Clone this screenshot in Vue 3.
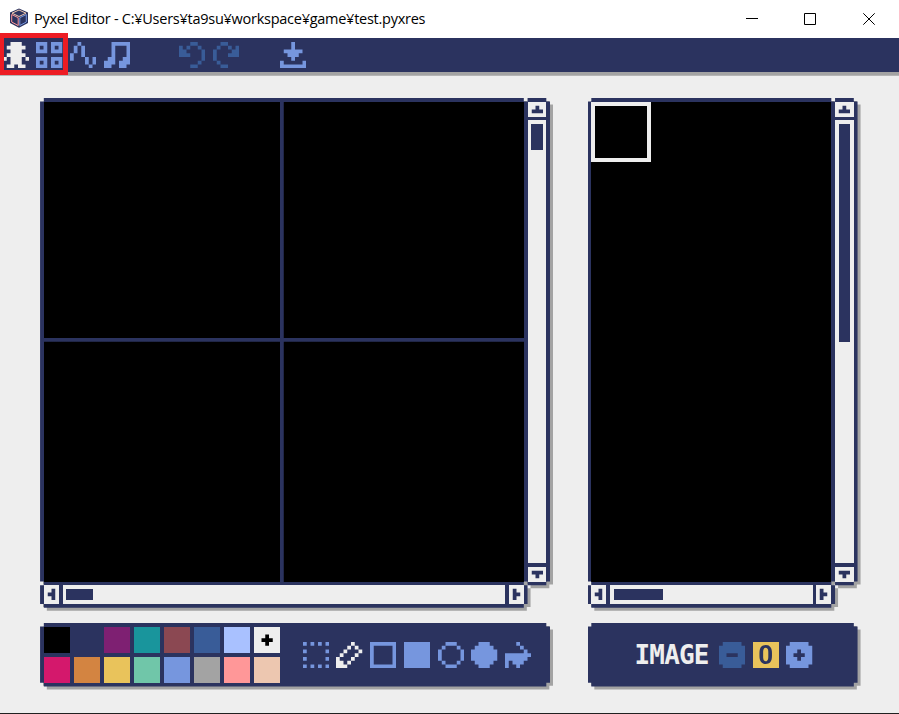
<script setup>
import { ref } from 'vue';

const title = ref("Pyxel Editor - C:¥Users¥ta9su¥workspace¥game¥test.pyxres");
const color = ref(7);
const tool = ref("pencil");
const image = ref(0);

const palette = [
    "#000000", "#2b335f", "#7e2072", "#19959c", "#8b4852", "#395c98", "#a9c1ff", "#eeeeee",
    "#d4186c", "#d38441", "#e9c35b", "#70c6a9", "#7696de", "#a3a3a3", "#ff9798", "#edc7b0",
];

const bitmaps = {
    image: ["..###..", ".#####.", "..###..", ".#####.", "#.###.#", "..###..", ".##.##."],
    tilemap: ["###.###", "#.#.#.#", "###.###", ".......", "###.###", "#.#.#.#", "###.###"],
    sound: ["..#....", ".#.#...", ".#.#...", "#..#...", "#...#.#", "....#.#", ".....#."],
    music: ["..#####", "..#...#", "..#...#", "..#...#", ".##..##", "###.###", "##..##."],
    undo: ["...##..", "#.#..#.", "##....#", "###...#", "......#", ".....#.", "...##.."],
    redo: ["..##...", ".#..#.#", "#....##", "#...###", "#......", ".#.....", "..##..."],
    save: ["...#...", "...#...", ".#####.", "..###..", "...#...", "#.....#", "#######"],
    select: ["#.#.#.#", ".......", "#.....#", ".......", "#.....#", ".......", "#.#.#.#"],
    pencil: ["....#..", "...#.#.", "..#...#", ".#...#.", "#...#..", "##.#...", "###...."],
    rectb: ["#######", "#.....#", "#.....#", "#.....#", "#.....#", "#.....#", "#######"],
    rect: ["#######", "#######", "#######", "#######", "#######", "#######", "#######"],
    circb: ["..###..", ".#...#.", "#.....#", "#.....#", "#.....#", ".#...#.", "..###.."],
    circ: ["..###..", ".#####.", "#######", "#######", "#######", ".#####.", "..###.."],
    bucket: ["...#...", "....#..", ".....#.", "#######", "######.", "#.###..", "#..#..."],
    minus: [".#####.", "#######", "#######", "##...##", "#######", "#######", ".#####."],
    plus: [".#####.", "#######", "###.###", "##...##", "###.###", "#######", ".#####."],
    cross: [".......", ".......", "...#...", "..###..", "...#...", ".......", "......."],
};

const editors = ["image", "tilemap", "sound", "music"];
const tools = ["select", "pencil", "rectb", "rect", "circb", "circ", "bucket"];

// one path per bitmap, one box per horizontal run
function toPath(name) {
    let d = "";
    bitmaps[name].forEach((row, y) => {
        for (const run of row.matchAll(/#+/g)) {
            const w = run[0].length;
            d += `M${run.index} ${y}h${w}v1h-${w}z`;
        }
    });
    return d;
}
</script>


<template>
    <div class="window">
        <header class="titlebar">
            <svg class="logo" viewBox="0 0 20 20">
                <path d="M10 .5 19 4.500V15L10 19.700 1 15V4.500z" fill="#2b335f" />
                <path d="M10 2 17 5.200 10 8.500 3 5.200z" fill="none" stroke="#edc7b0" stroke-width="1" />
                <path d="M2.700 6.500V14L9.200 17.500V9.700z" fill="none" stroke="#ff9798" stroke-width="1" />
                <path d="M17.300 6.500V14L10.800 17.500V9.700z" fill="none" stroke="#7696de" stroke-width="1" />
            </svg>
            <span class="title">{{ title }}</span>
            <div class="controls">
                <svg viewBox="0 0 12 12"><path d="M0 5.500H12" /></svg>
                <svg viewBox="0 0 12 12"><path d="M.5 .5H11.500V11.500H.5z" /></svg>
                <svg viewBox="0 0 12 12"><path d="M.3 .3 11.700 11.700M11.700 .3 .3 11.700" /></svg>
            </div>
        </header>

        <div class="screen">
            <nav class="toolbar">
                <svg v-for="name in editors" :key="name" class="icon" :class="{ active: name === 'image' }" viewBox="0 0 7 7">
                    <path :d="toPath(name)" />
                </svg>
                <svg class="icon off undo" viewBox="0 0 7 7"><path :d="toPath('undo')" /></svg>
                <svg class="icon off" viewBox="0 0 7 7"><path :d="toPath('redo')" /></svg>
                <svg class="icon save" viewBox="0 0 7 7"><path :d="toPath('save')" /></svg>
            </nav>

            <main>
                <div v-for="view in ['canvas', 'viewer']" :key="view" class="shadow">
                    <div class="view" :class="view">
                        <div class="picture">
                            <div v-if="view === 'viewer'" class="focus"></div>
                        </div>
                        <div class="vbar">
                            <svg class="arrow" viewBox="0 0 5 4"><path d="M2 1h1v1h1v1h-3v-1h1z" /></svg>
                            <div class="track"><div class="slider"></div></div>
                            <svg class="arrow" viewBox="0 0 5 4"><path d="M1 1h3v1h-1v1h-1v-1h-1z" /></svg>
                        </div>
                        <div class="hbar">
                            <svg class="arrow" viewBox="0 0 4 5"><path d="M2 1h1v3h-1v-1h-1v-1h1z" /></svg>
                            <div class="track"><div class="slider"></div></div>
                            <svg class="arrow" viewBox="0 0 4 5"><path d="M1 1h1v1h1v1h-1v1h-1z" /></svg>
                        </div>
                    </div>
                </div>

                <div class="shadow">
                    <div class="panel">
                        <div class="palette">
                            <div v-for="(c, i) in palette" :key="c" :style="{ background: c }" @click="color = i">
                                <svg v-if="i === color" class="mark" viewBox="0 0 7 7"><path :d="toPath('cross')" /></svg>
                            </div>
                        </div>
                        <div class="tools">
                            <svg v-for="name in tools" :key="name" class="icon" :class="{ active: name === tool }"
                                viewBox="0 0 7 7" @click="tool = name">
                                <path :d="toPath(name)" />
                            </svg>
                        </div>
                    </div>
                </div>

                <div class="shadow">
                    <div class="panel picker">
                        <span class="label">IMAGE</span>
                        <svg class="icon" :class="{ off: image === 0 }" viewBox="0 0 7 7" @click="image = Math.max(0, image - 1)">
                            <path :d="toPath('minus')" />
                        </svg>
                        <span class="number">{{ image }}</span>
                        <svg class="icon" viewBox="0 0 7 7" @click="image = Math.min(2, image + 1)">
                            <path :d="toPath('plus')" />
                        </svg>
                    </div>
                </div>
            </main>
        </div>

        <div class="highlight"></div>
    </div>
</template>


<style>
body {
    margin: 0;
    overflow: hidden;
}
</style>

<style scoped>
.window {
    /* size of one Pyxel pixel */
    --u: 3.75px;

    position: relative;
    box-sizing: border-box;
    width: 899px;
    height: 714px;
    overflow: hidden;
    background: #eeeeee;
    border-bottom: 1px solid #202020;
}

.titlebar {
    display: flex;
    align-items: center;
    box-sizing: border-box;
    height: 37.8px;
    padding: 0 24px 0 9px;
    background: #ffffff;
}

.logo {
    width: 20px;
    height: 20px;
    margin-top: -2px;
}

.title {
    margin-left: 5px;
    font: 14.5px "Open Sans", "Noto Sans", sans-serif;
    letter-spacing: -0.26px;
    white-space: nowrap;
    color: #000000;
}

.controls {
    display: flex;
    gap: 46px;
    margin-left: auto;
}

.controls svg {
    width: 12px;
    height: 12px;
    fill: none;
    stroke: #000000;
    stroke-width: 1;
}

.controls svg:last-child {
    margin-left: 1px;
}

.screen {
    width: calc(var(--u) * 241);
    margin-left: -1.2px;
}

.toolbar {
    display: flex;
    gap: calc(var(--u) * 2);
    box-sizing: border-box;
    height: calc(var(--u) * 9);
    margin-bottom: var(--u);
    padding: var(--u);
    background: #2b335f;
    box-shadow: 0 3.75px 0 #a3a3a3;
}

.icon {
    display: block;
    flex: none;
    width: calc(var(--u) * 7);
    height: calc(var(--u) * 7);
    fill: #7696de;
}

.icon.active {
    fill: #eeeeee;
}

.icon.off {
    fill: #395c98;
}

.undo {
    margin-left: calc(var(--u) * 11);
}

.save {
    margin-left: calc(var(--u) * 9);
}

main {
    display: grid;
    grid-template-columns: calc(var(--u) * 136) calc(var(--u) * 72);
    grid-template-rows: calc(var(--u) * 136) calc(var(--u) * 17);
    gap: calc(var(--u) * 4) calc(var(--u) * 10);
    padding: calc(var(--u) * 6) 0 0 calc(var(--u) * 11);
}

.shadow {
    filter: drop-shadow(3.75px 3.75px 0 #a3a3a3);
}

.view {
    --w: calc(var(--u) * 136);
    --picture: calc(var(--u) * 128);

    display: grid;
    grid-template-columns: var(--picture) calc(var(--u) * 5);
    grid-template-rows: calc(var(--u) * 128) calc(var(--u) * 5);
    gap: var(--u);
    box-sizing: border-box;
    height: 100%;
    padding: var(--u);
    background: #2b335f;
    /* outline with the notched corners of both scroll bars */
    clip-path: polygon(
        var(--u) 0,
        calc(var(--w) - var(--u) * 7) 0,
        calc(var(--w) - var(--u) * 7) var(--u),
        calc(var(--w) - var(--u) * 6) var(--u),
        calc(var(--w) - var(--u) * 6) 0,
        calc(var(--w) - var(--u)) 0,
        calc(var(--w) - var(--u)) var(--u),
        var(--w) var(--u),
        var(--w) calc(var(--u) * 129),
        calc(var(--w) - var(--u)) calc(var(--u) * 129),
        calc(var(--w) - var(--u)) calc(var(--u) * 130),
        calc(var(--w) - var(--u) * 6) calc(var(--u) * 130),
        calc(var(--w) - var(--u) * 6) calc(var(--u) * 129),
        calc(var(--w) - var(--u) * 7) calc(var(--u) * 129),
        calc(var(--w) - var(--u) * 7) calc(var(--u) * 130),
        calc(var(--w) - var(--u) * 6) calc(var(--u) * 130),
        calc(var(--w) - var(--u) * 6) calc(var(--u) * 135),
        calc(var(--w) - var(--u) * 7) calc(var(--u) * 135),
        calc(var(--w) - var(--u) * 7) 100%,
        var(--u) 100%,
        var(--u) calc(var(--u) * 135),
        0 calc(var(--u) * 135),
        0 calc(var(--u) * 130),
        var(--u) calc(var(--u) * 130),
        var(--u) calc(var(--u) * 129),
        0 calc(var(--u) * 129),
        0 var(--u),
        var(--u) var(--u)
    );
}

.viewer {
    --w: calc(var(--u) * 72);
    --picture: calc(var(--u) * 64);
}

.picture {
    background: #000000;
}

.canvas .picture {
    background:
        linear-gradient(#2b335f, #2b335f) calc(var(--u) * 63) 0 / var(--u) 100% no-repeat,
        linear-gradient(#2b335f, #2b335f) 0 calc(var(--u) * 63) / 100% var(--u) no-repeat,
        #000000;
}

.focus {
    box-sizing: border-box;
    width: calc(var(--u) * 16);
    height: calc(var(--u) * 16);
    border: 4px solid #eeeeee;
}

.vbar,
.hbar {
    display: flex;
    gap: var(--u);
}

.vbar {
    flex-direction: column;
}

.arrow {
    display: block;
    flex: none;
    fill: #2b335f;
    background: #eeeeee;
}

.vbar .arrow {
    height: calc(var(--u) * 4);
}

.hbar .arrow {
    width: calc(var(--u) * 4);
}

.track {
    flex: 1;
    box-sizing: border-box;
    padding: var(--u);
    background: #eeeeee;
}

.slider {
    background: #2b335f;
}

.vbar .slider {
    height: calc(var(--u) * 7);
}

.hbar .slider {
    width: calc(var(--u) * 7);
    height: 100%;
}

.viewer .vbar .slider {
    height: calc(var(--u) * 58);
}

.viewer .hbar .slider {
    width: calc(var(--u) * 13);
}

.panel {
    display: flex;
    align-items: center;
    box-sizing: border-box;
    height: 100%;
    padding: var(--u);
    background: #2b335f;
    clip-path: polygon(
        var(--u) 0,
        calc(100% - var(--u)) 0,
        calc(100% - var(--u)) var(--u),
        100% var(--u),
        100% calc(100% - var(--u)),
        calc(100% - var(--u)) calc(100% - var(--u)),
        calc(100% - var(--u)) 100%,
        var(--u) 100%,
        var(--u) calc(100% - var(--u)),
        0 calc(100% - var(--u)),
        0 var(--u),
        var(--u) var(--u)
    );
}

.palette {
    display: grid;
    grid-template-columns: repeat(8, calc(var(--u) * 7));
    grid-auto-rows: calc(var(--u) * 7);
    gap: var(--u);
}

.mark {
    display: block;
    fill: #000000;
}

.tools {
    display: flex;
    gap: calc(var(--u) * 2);
    margin-left: calc(var(--u) * 6);
}

.picker {
    gap: calc(var(--u) * 2);
    padding-left: calc(var(--u) * 12.5);
}

.label {
    width: calc(var(--u) * 20.5);
    font: bold 26px/26px "DejaVu Sans Mono", monospace;
    letter-spacing: -0.8px;
    color: #eeeeee;
}

.number {
    width: calc(var(--u) * 7);
    height: calc(var(--u) * 7);
    font: bold 26px/27px Roboto, sans-serif;
    text-align: center;
    color: #2b335f;
    background: #e9c35b;
}

/* red frame over the image and tilemap buttons */
.highlight {
    position: absolute;
    top: 33px;
    left: -1px;
    box-sizing: border-box;
    width: 69px;
    height: 42px;
    border: 5px solid #ed1c24;
}
</style>
